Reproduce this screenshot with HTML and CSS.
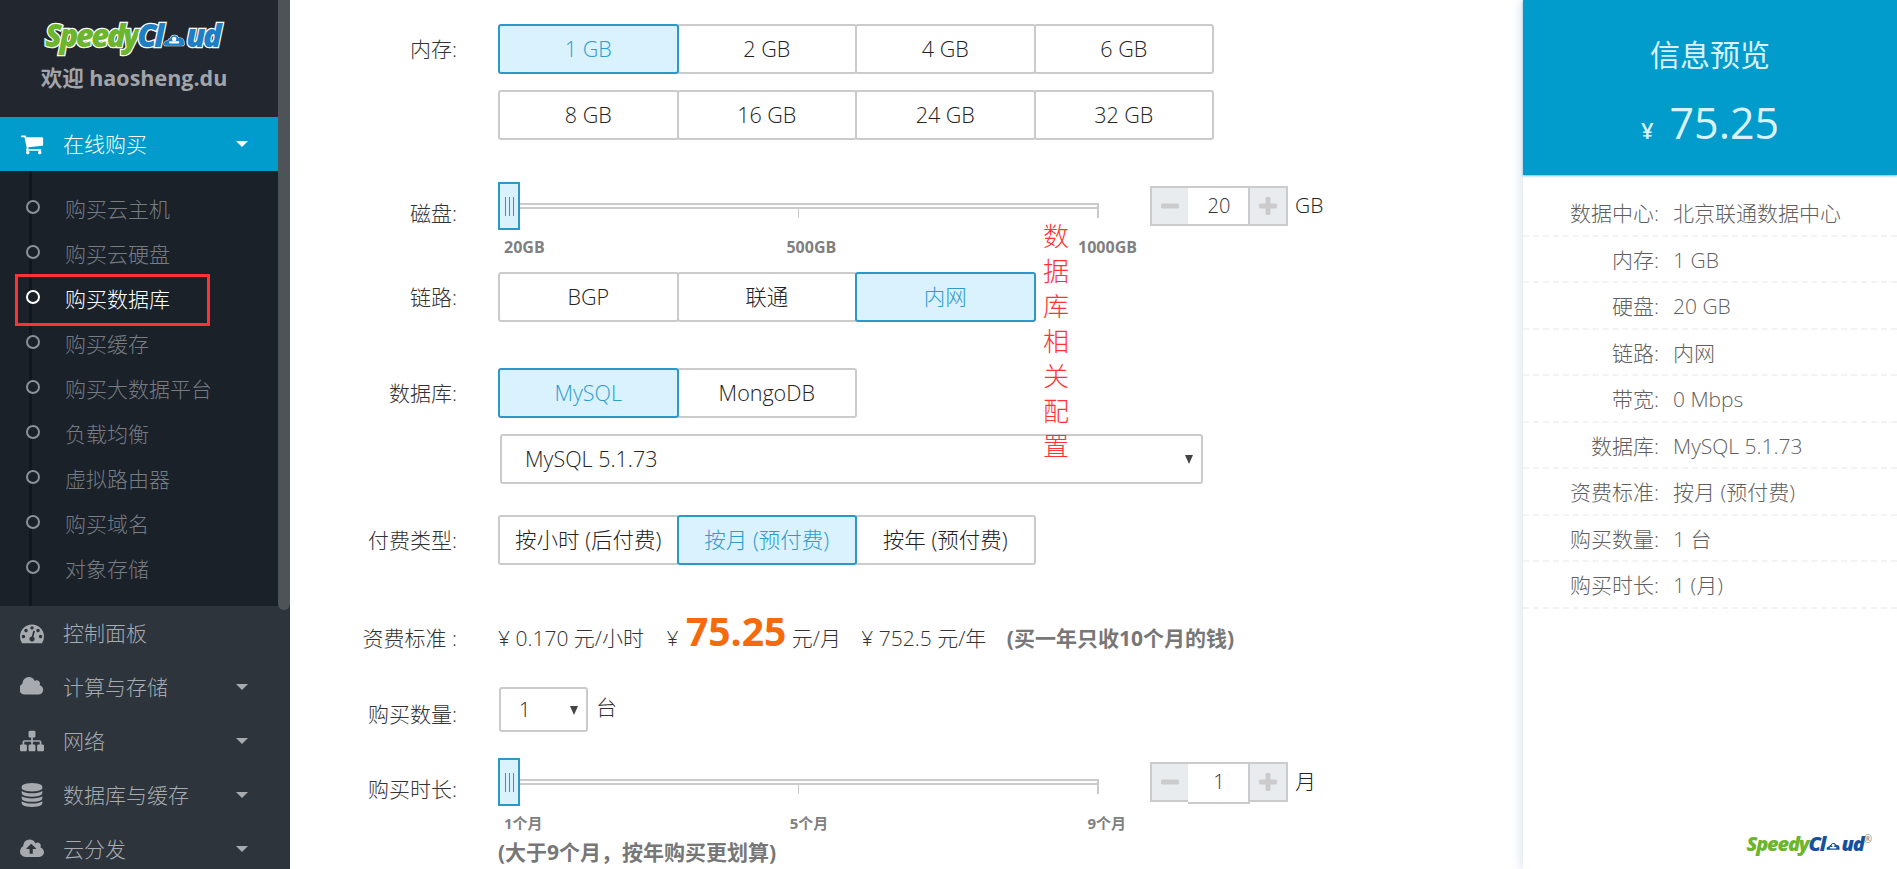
FILE: index.html
```html
<!DOCTYPE html>
<html lang="zh-CN">
<head>
<meta charset="utf-8">
<title>SpeedyCloud</title>
<link rel="stylesheet" href="styles.css">
</head>
<body>
<div class="app">
  <nav class="sidebar">
    <div class="thumb"></div>
    <header class="brand">
      <div class="logo logo--outlined"><span class="sp">Speedy</span><span class="cl">Cl<svg class="logo-cloud" viewBox="0 0 30 20"><path d="M2 18c-2-4 1-7 5-7 0-2 2-3 3-3 1-5 9-6 11 0 4-1 8 2 7 6 1 2 0 4-1 4z" fill="#1e7fc4" stroke="#fff" stroke-width="1.5"/><circle cx="15" cy="9" r="3" fill="#fff"/><rect x="8" y="12" width="14" height="3" rx="1.5" fill="#fff"/></svg>ud</span></div>
      <div class="welcome">欢迎 haosheng.du</div>
    </header>
    <ul class="menu">
      <li class="menu-item menu-item--active">
        <svg class="icon" viewBox="0 0 1792 1792"><path d="M704 1536q0 52-38 90t-90 38-90-38-38-90 38-90 90-38 90 38 38 90zm896 0q0 52-38 90t-90 38-90-38-38-90 38-90 90-38 90 38 38 90zm128-1088v512q0 24-16.5 42.5t-40.5 21.5l-1044 122q13 60 13 70 0 16-24 64h920q26 0 45 19t19 45-19 45-45 19h-1024q-26 0-45-19t-19-45q0-11 8-31.5t16-36 21.5-40 15.5-29.5l-177-823h-204q-26 0-45-19t-19-45 19-45 45-19h256q16 0 28.5 6.5t19.5 15.5 13 24.5 8 26 5.5 29.5 4.5 26h1201q26 0 45 19t19 45z"/></svg>
        <span class="menu-text">在线购买</span><i class="caret"></i>
      </li>
      <li>
        <ul class="submenu">
          <li class="sub-item">购买云主机</li>
          <li class="sub-item">购买云硬盘</li>
          <li class="sub-item sub-item--current">购买数据库<div class="redbox"></div></li>
          <li class="sub-item">购买缓存</li>
          <li class="sub-item">购买大数据平台</li>
          <li class="sub-item">负载均衡</li>
          <li class="sub-item">虚拟路由器</li>
          <li class="sub-item">购买域名</li>
          <li class="sub-item">对象存储</li>
        </ul>
      </li>
      <li class="menu-item">
        <svg class="icon" viewBox="0 0 1792 1792"><path d="M384 1152q0-53-37.5-90.5t-90.5-37.5-90.5 37.5-37.5 90.5 37.5 90.5 90.5 37.5 90.5-37.5 37.5-90.5zm192-448q0-53-37.5-90.5t-90.5-37.5-90.5 37.5-37.5 90.5 37.5 90.5 90.5 37.5 90.5-37.5 37.5-90.5zm428 481l101-382q6-26-7.5-48.5t-38.5-29.5-48 6.5-30 39.5l-101 382q-60 5-107 43.5t-63 98.5q-20 77 20 146t117 89 146-20 89-117q16-60-6-117t-72-91zm660-33q0-53-37.5-90.5t-90.5-37.5-90.5 37.5-37.5 90.5 37.5 90.5 90.5 37.5 90.5-37.5 37.5-90.5zm-640-640q0-53-37.5-90.5t-90.5-37.5-90.5 37.5-37.5 90.5 37.5 90.5 90.5 37.5 90.5-37.5 37.5-90.5zm448 192q0-53-37.5-90.5t-90.5-37.5-90.5 37.5-37.5 90.5 37.5 90.5 90.5 37.5 90.5-37.5 37.5-90.5zm320 448q0 261-141 483-19 29-54 29h-1402q-35 0-54-29-141-221-141-483 0-182 71-348t191-286 286-191 348-71 348 71 286 191 191 286 71 348z"/></svg>
        <span class="menu-text">控制面板</span>
      </li>
      <li class="menu-item">
        <svg class="icon" viewBox="0 0 1920 1792"><path d="M1856 1120q0 159-112.5 271.5t-271.5 112.5h-1088q-185 0-316.5-131.5t-131.5-316.5q0-132 71-241.5t187-163.5q-2-28-2-43 0-212 150-362t362-150q158 0 286.5 88t187.5 230q70-62 166-62 106 0 181 75t75 181q0 75-41 138 129 30 213 134.5t84 239.5z"/></svg>
        <span class="menu-text">计算与存储</span><i class="caret"></i>
      </li>
      <li class="menu-item">
        <svg class="icon" viewBox="0 0 1792 1792"><path d="M1792 1248v320q0 40-28 68t-68 28h-320q-40 0-68-28t-28-68v-320q0-40 28-68t68-28h96v-192h-512v192h96q40 0 68 28t28 68v320q0 40-28 68t-68 28h-320q-40 0-68-28t-28-68v-320q0-40 28-68t68-28h96v-192h-512v192h96q40 0 68 28t28 68v320q0 40-28 68t-68 28h-320q-40 0-68-28t-28-68v-320q0-40 28-68t68-28h96v-192q0-52 38-90t90-38h512v-192h-96q-40 0-68-28t-28-68v-320q0-40 28-68t68-28h320q40 0 68 28t28 68v320q0 40-28 68t-68 28h-96v192h512q52 0 90 38t38 90v192h96q40 0 68 28t28 68z"/></svg>
        <span class="menu-text">网络</span><i class="caret"></i>
      </li>
      <li class="menu-item">
        <svg class="icon" viewBox="0 0 1536 1792"><path d="M768 768q237 0 443-43t325-127v170q0 69-103 128t-280 93.5-385 34.5-385-34.5-280-93.5-103-128v-170q119 84 325 127t443 43zm0 768q237 0 443-43t325-127v170q0 69-103 128t-280 93.5-385 34.5-385-34.5-280-93.5-103-128v-170q119 84 325 127t443 43zm0-384q237 0 443-43t325-127v170q0 69-103 128t-280 93.5-385 34.5-385-34.5-280-93.5-103-128v-170q119 84 325 127t443 43zm0-1152q208 0 385 34.5t280 93.5 103 128v128q0 69-103 128t-280 93.5-385 34.5-385-34.5-280-93.5-103-128v-128q0-69 103-128t280-93.5 385-34.5z"/></svg>
        <span class="menu-text">数据库与缓存</span><i class="caret"></i>
      </li>
      <li class="menu-item">
        <svg class="icon" viewBox="0 0 1920 1792"><path d="M1280 864q0-14-9-23l-352-352q-9-9-23-9t-23 9l-351 351q-10 12-10 24 0 14 9 23t23 9h224v352q0 13 9.5 22.5t22.5 9.5h192q13 0 22.5-9.5t9.5-22.5v-352h224q13 0 22.5-9.5t9.5-22.5zm640 288q0 159-112.5 271.5t-271.5 112.5h-1088q-185 0-316.5-131.5t-131.5-316.5q0-130 70-240t188-165q-2-30-2-43 0-212 150-362t362-150q156 0 285.5 87t188.5 231q71-62 166-62 106 0 181 75t75 181q0 76-41 138 130 31 213.5 135.5t83.5 238.5z"/></svg>
        <span class="menu-text">云分发</span><i class="caret"></i>
      </li>
    </ul>
  </nav>

  <main class="main">
    <div class="annotation">数据库相关配置</div>

    <section class="row">
      <div class="label">内存:</div>
      <div class="control">
        <div class="btns">
          <div class="btn btn--on">1 GB</div><div class="btn">2 GB</div><div class="btn">4 GB</div><div class="btn">6 GB</div>
        </div>
        <div class="btns btns--next">
          <div class="btn">8 GB</div><div class="btn">16 GB</div><div class="btn">24 GB</div><div class="btn">32 GB</div>
        </div>
      </div>
    </section>

    <section class="row row--disk">
      <div class="label label--slider">磁盘:</div>
      <div class="slider-wrap">
        <div class="slider">
          <div class="handle"><i></i><i></i><i></i></div>
          <div class="track"></div>
          <div class="ticks"><i></i><i></i><i class="tick-end"></i></div>
        </div>
        <div class="scale scale--disk"><span>20GB</span><span>500GB</span><span>1000GB</span></div>
      </div>
      <div class="spinner">
        <div class="spin-btn"><svg viewBox="0 0 18 18"><rect x="0" y="6.5" width="18" height="5" rx="1.5"/></svg></div>
        <div class="spin-val">20</div>
        <div class="spin-btn"><svg viewBox="0 0 18 18"><rect x="0" y="6.5" width="18" height="5" rx="1.5"/><rect x="6.5" y="0" width="5" height="18" rx="1.5"/></svg></div>
      </div>
      <div class="unit">GB</div>
    </section>

    <section class="row row--link">
      <div class="label">链路:</div>
      <div class="control">
        <div class="btns"><div class="btn">BGP</div><div class="btn">联通</div><div class="btn btn--on">内网</div></div>
      </div>
    </section>

    <section class="row row--db">
      <div class="label">数据库:</div>
      <div class="control">
        <div class="btns"><div class="btn btn--on">MySQL</div><div class="btn">MongoDB</div></div>
        <div class="select select--wide">MySQL 5.1.73<i class="arrow"></i></div>
      </div>
    </section>

    <section class="row row--pay">
      <div class="label">付费类型:</div>
      <div class="control">
        <div class="btns"><div class="btn">按小时 (后付费)</div><div class="btn btn--on">按月 (预付费)</div><div class="btn">按年 (预付费)</div></div>
      </div>
    </section>

    <section class="row row--price">
      <div class="label">资费标准 :</div>
      <div class="price-line">
        <span>¥ 0.170 元/小时</span>
        <span class="p-month">¥ <b class="big">75.25</b> 元/月</span>
        <span class="p-year">¥ 752.5 元/年</span>
        <b class="hint hint--inline">(买一年只收10个月的钱)</b>
      </div>
    </section>

    <section class="row row--qty">
      <div class="label label--qty">购买数量:</div>
      <div class="select select--qty">1<i class="arrow"></i></div>
      <div class="qty-unit">台</div>
    </section>

    <section class="row row--time">
      <div class="label label--slider">购买时长:</div>
      <div class="slider-wrap">
        <div class="slider">
          <div class="handle"><i></i><i></i><i></i></div>
          <div class="track"></div>
          <div class="ticks"><i></i><i></i><i class="tick-end"></i></div>
        </div>
        <div class="scale scale--time"><span>1个月</span><span class="scale-mid">5个月</span><span>9个月</span></div>
        <b class="hint hint--note">(大于9个月，按年购买更划算)</b>
      </div>
      <div class="spinner">
        <div class="spin-btn"><svg viewBox="0 0 18 18"><rect x="0" y="6.5" width="18" height="5" rx="1.5"/></svg></div>
        <div class="spin-val spin-val--raised">1</div>
        <div class="spin-btn"><svg viewBox="0 0 18 18"><rect x="0" y="6.5" width="18" height="5" rx="1.5"/><rect x="6.5" y="0" width="5" height="18" rx="1.5"/></svg></div>
      </div>
      <div class="unit">月</div>
    </section>
  </main>

  <aside class="summary">
    <header class="summary-head">
      <h2 class="summary-title">信息预览</h2>
      <div class="summary-price"><span class="yen">¥</span><span class="amount">75.25</span></div>
    </header>
    <dl class="summary-list">
      <div class="s-row"><dt>数据中心:</dt><dd>北京联通数据中心</dd></div>
      <div class="s-row"><dt>内存:</dt><dd>1 GB</dd></div>
      <div class="s-row"><dt>硬盘:</dt><dd>20 GB</dd></div>
      <div class="s-row"><dt>链路:</dt><dd>内网</dd></div>
      <div class="s-row"><dt>带宽:</dt><dd>0 Mbps</dd></div>
      <div class="s-row"><dt>数据库:</dt><dd>MySQL 5.1.73</dd></div>
      <div class="s-row"><dt>资费标准:</dt><dd>按月 (预付费)</dd></div>
      <div class="s-row"><dt>购买数量:</dt><dd>1 台</dd></div>
      <div class="s-row"><dt>购买时长:</dt><dd>1 (月)</dd></div>
    </dl>
    <div class="summary-foot">
      <div class="logo logo--small"><span class="sp">Speedy</span><span class="cl">Cl<svg class="logo-cloud" viewBox="0 0 30 20"><path d="M2 18c-2-4 1-7 5-7 0-2 2-3 3-3 1-5 9-6 11 0 4-1 8 2 7 6 1 2 0 4-1 4z" fill="#16509f"/><circle cx="15" cy="9" r="3" fill="#fff"/><rect x="8" y="12" width="14" height="3" rx="1.5" fill="#fff"/></svg>ud</span><sup class="reg">®</sup></div>
    </div>
  </aside>
</div>
</body>
</html>
```
FILE: styles.css
```css
* { box-sizing: border-box; }
html, body { margin: 0; height: 100%; overflow: hidden; background: #fff; }
body { font-family: "Open Sans", "Noto Sans CJK SC", sans-serif; font-size: 21px; color: #333; }
ul, dl, dd, h2 { margin: 0; padding: 0; list-style: none; }

.app { display: flex; height: 869px; overflow: hidden; }

/* sidebar */
.sidebar { position: relative; flex: 0 0 290px; height: 869px; overflow: hidden; background: #2d343c; }
.thumb { position: absolute; right: 0; top: 0; width: 12px; height: 610px; background: #4e5358; border-radius: 0 0 6px 6px; z-index: 2; }
.brand { height: 117px; background: #22272f; padding-top: 15px; }
.logo { font-family: "Open Sans", sans-serif; font-style: italic; font-weight: 800; white-space: nowrap; }
.logo .sp { color: #6cb52d; }
.logo .cl { color: #1e7fc4; }
.logo--outlined { width: 278px; padding-left: 45px; font-size: 31px; line-height: 40px; letter-spacing: -2.5px; paint-order: stroke fill; -webkit-text-stroke: 2.5px #fff; }
.logo-cloud { display: inline-block; width: .72em; height: .5em; margin: 0 1px; vertical-align: baseline; }
.welcome { width: 268px; text-align: center; margin-top: 8px; font-size: 21.5px; line-height: 30px; font-weight: 700; color: #a1a4a9; }

.menu-item { display: flex; align-items: center; height: 54px; padding-left: 20px; color: #a7abb0; font-size: 21px; }
.menu-item .icon { flex: 0 0 24px; width: 24px; height: 24px; fill: #a7abb0; }
.menu-text { margin-left: 19px; line-height: 54px; font-weight: 300; }
.caret { margin-left: auto; margin-right: 42px; width: 0; height: 0; border-left: 6px solid transparent; border-right: 6px solid transparent; border-top: 6px solid #a7abb0; }
.menu-item--active { background: #019bcc; color: #fff; }
.menu-item--active .icon { fill: #fff; }
.menu-item--active .caret { border-top-color: #fff; }

.submenu { position: relative; height: 435px; padding: 16px 0 14px; background: #1a2129; }
.submenu::before { content: ""; position: absolute; left: 29px; top: 0; bottom: 0; width: 3px; background: #12171d; }
.sub-item { position: relative; height: 45px; padding-left: 65px; line-height: 45px; font-size: 21px; font-weight: 300; color: #767c82; }
.sub-item::before { content: ""; position: absolute; left: 26px; top: 13px; width: 10px; height: 10px; border: 2px solid #8d9196; border-radius: 50%; background: #1a2129; }
.sub-item--current { color: #fff; }
.sub-item--current::before { border-color: #fff; border-width: 2.5px; }
.redbox { position: absolute; left: 15px; top: -3.5px; width: 195px; height: 52px; border: 3px solid #f33; }

/* main */
.main { position: relative; flex: 1 1 auto; padding-top: 24px; }
.annotation { position: absolute; z-index: 3; left: 753px; top: 219px; width: 26px; font-size: 26px; font-weight: 300; line-height: 35px; color: #ff3333; }

.row { display: flex; align-items: flex-start; }
.label { flex: 0 0 167px; text-align: right; height: 50px; line-height: 50px; font-size: 21px; font-weight: 300; color: #333; }
.control { margin-left: 41px; }
.label--slider { line-height: 62px; height: 62px; }
.label--qty { line-height: 54px; height: 54px; }
.row--disk { margin-top: 42px; }
.row--link { margin-top: 15px; }
.row--db { margin-top: 46px; }
.row--pay { margin-top: 31px; }
.row--price { margin-top: 48px; }
.row--qty { margin-top: 24px; }
.row--time { margin-top: 17px; }

.btns { display: flex; }
.btns--next { margin-top: 16px; }
.btn { position: relative; flex: 0 0 180.5px; height: 50px; line-height: 46px; margin-left: -2px; text-align: center; font-size: 21.5px; font-weight: 300; color: #222; background: #fff; border: 2px solid #cbcbcb; border-radius: 3px; }
.btn:first-child { margin-left: 0; }
.btn--on { z-index: 1; color: #2e9bcd; background: #d9f2fe; border-color: #2c98c8; }

/* slider */
.slider-wrap { flex: 0 0 601px; width: 601px; min-width: 0; margin-left: 41px; }
.slider { position: relative; height: 48px; padding-top: 21px; }
.handle { position: absolute; left: 0; top: 0; width: 22px; height: 48px; display: flex; justify-content: center; align-items: center; gap: 3px; background: #d9f2fe; border: 2px solid #2c98c8; }
.handle i { width: 1px; height: 19px; background: #2c98c8; }
.track { height: 6px; border: 2px solid #cbcbcb; border-left: 0; background: #fff; }
.ticks { display: flex; justify-content: space-between; }
.ticks i { width: 1px; height: 9px; background: #cbcbcb; }
.ticks .tick-end { width: 2px; }
.scale { display: flex; justify-content: space-between; margin-top: 7px; margin-left: 6px; height: 20px; line-height: 20px; font-size: 16px; font-weight: 700; color: #808080; white-space: nowrap; }
.scale--disk { width: 633px; }
.scale--time { width: 622px; font-size: 15px; }
.scale-mid { margin-left: -12px; }

.spinner { display: flex; margin: 4px 0 0 51px; height: 40px; }
.spin-btn { flex: 0 0 40px; display: flex; align-items: center; justify-content: center; background: #e9ecef; border: 2px solid #cbcbcb; }
.spin-btn svg { width: 18px; height: 18px; fill: #cbcbcb; }
.spin-val { flex: 0 0 62px; margin: 0 -2px; text-align: center; font-size: 20px; font-weight: 300; color: #333; background: #fff; border-top: 2px solid #cbcbcb; border-bottom: 2px solid #cbcbcb; line-height: 36px; }
.spin-val--raised { height: 42px; }
.unit { margin: 4px 0 0 7px; line-height: 38px; font-size: 21px; font-weight: 300; color: #222; }

/* select */
.select { position: relative; background: #fff; border: 2px solid #cbcbcb; border-radius: 3px; color: #222; font-size: 21.5px; font-weight: 300; }
.select--wide { width: 703px; height: 50px; margin: 16px 0 0 2px; padding-left: 23px; line-height: 46px; }
.select--qty { flex: 0 0 89px; height: 45px; margin-left: 42px; padding-left: 18px; line-height: 41px; font-size: 20px; }
.arrow { position: absolute; right: 8px; top: 50%; margin-top: -4px; width: 0; height: 0; border-left: 4px solid transparent; border-right: 4px solid transparent; border-top: 9px solid #444; }
.qty-unit { margin-left: 8px; line-height: 40px; font-size: 21px; font-weight: 300; color: #333; }

/* price */
.price-line { margin: -7px 0 0 41px; height: 50px; line-height: 50px; font-size: 21px; font-weight: 300; color: #333; white-space: nowrap; }
.p-month { margin-left: 17px; }
.p-year { margin-left: 15px; }
.big { margin-left: 2px; font-size: 39px; color: #f56a0a; font-weight: 700; }
.hint { font-size: 21px; font-weight: 700; color: #777; }
.hint--inline { margin-left: 15px; }
.hint--note { display: block; margin-top: 4px; line-height: 30px; white-space: nowrap; }

/* summary */
.summary { display: flex; flex-direction: column; flex: 0 0 374px; height: 869px; background: #fff; box-shadow: -3px 0 8px rgba(170, 190, 215, .35); }
.summary-head { height: 175px; padding-top: 34px; text-align: center; background: #019bcc; color: #d9f2fe; box-shadow: 0 1px 2px rgba(1, 155, 204, .6); }
.summary-title { font-size: 30px; line-height: 42px; font-weight: 400; }
.summary-price { display: flex; justify-content: center; align-items: baseline; margin-top: 16px; line-height: 62px; }
.yen { font-size: 22px; font-weight: 600; margin-right: 16px; }
.amount { font-size: 43px; }
.summary-list { padding-top: 15px; }
.s-row { display: flex; height: 46.5px; line-height: 47px; font-size: 21px; font-weight: 300; color: #5f5f5f; border-bottom: 2px dashed #f3f3f3; }
.s-row dt { flex: 0 0 136px; text-align: right; }
.s-row dd { margin-left: 14px; }
.summary-foot { margin-top: auto; padding: 0 25px 12px 0; display: flex; justify-content: flex-end; }
.logo--small { font-size: 20px; line-height: 26px; letter-spacing: -1.2px; }
.logo--small .sp { color: #6cb52d; }
.logo--small .cl { color: #16509f; }
.reg { font-size: 10px; font-style: normal; font-weight: 400; color: #777; line-height: 0; letter-spacing: 0; vertical-align: 8px; }
```
